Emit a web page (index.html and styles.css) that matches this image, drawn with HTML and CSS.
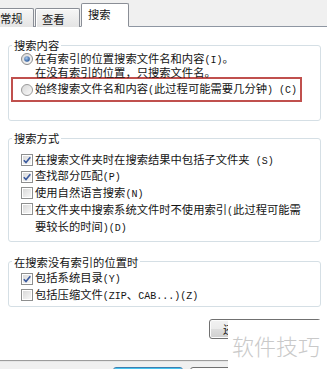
FILE: index.html
```html
<!DOCTYPE html>
<html lang="zh-CN">
<head>
<meta charset="utf-8">
<title>文件夹选项 - 搜索</title>
<link rel="stylesheet" href="styles.css">
</head>
<body>
<svg class="defs" width="0" height="0" aria-hidden="true">
  <defs>
    <linearGradient id="rg" x1="0" y1="0" x2="1" y2="1">
      <stop offset="0" stop-color="#d6d6d6"/>
      <stop offset="1" stop-color="#fbfbfb"/>
    </linearGradient>
    <radialGradient id="dot" cx="0.4" cy="0.35" r="0.7">
      <stop offset="0" stop-color="#a9c9ee"/>
      <stop offset="1" stop-color="#1e4f94"/>
    </radialGradient>
    <linearGradient id="cg" x1="0" y1="0" x2="1" y2="1">
      <stop offset="0" stop-color="#d9d9d9"/>
      <stop offset="1" stop-color="#f7f7f7"/>
    </linearGradient>
  </defs>
</svg>

<div class="tabs">
  <div class="tab t1">常规</div>
  <div class="tab t2">查看</div>
  <div class="tab t3 sel">搜索</div>
</div>

<div class="panel">
  <fieldset class="grp g1">
    <legend>搜索内容</legend>
    <div class="row r-first">
      <svg class="ctl" viewBox="0 0 12 12" width="12" height="12"><circle cx="6" cy="6" r="5.5" fill="url(#rg)" stroke="#8c8c8c"/><circle cx="6" cy="6" r="2.8" fill="url(#dot)"/></svg>
      <div class="txt tight">在有索引的位置搜索文件名和内容<span class="en">(I)</span>。<br>在没有索引的位置，只搜索文件名。</div>
    </div>
    <div class="hl">
      <div class="row">
        <svg class="ctl" viewBox="0 0 12 12" width="12" height="12"><circle cx="6" cy="6" r="5.5" fill="url(#rg)" stroke="#9a9a9a"/></svg>
        <div class="txt">始终搜索文件名和内容<span class="en">(</span>此过程可能需要几分钟<span class="en">) (C)</span></div>
      </div>
    </div>
  </fieldset>

  <fieldset class="grp g2">
    <legend>搜索方式</legend>
    <div class="row">
      <svg class="ctl" viewBox="0 0 12 12" width="12" height="12"><rect x=".5" y=".5" width="11" height="11" fill="#fff" stroke="#8e8f8f"/><rect x="2" y="2" width="8" height="8" fill="url(#cg)"/><path d="M2.8 6.2 L5 8.6 L9.3 3.2" fill="none" stroke="#3b5a9e" stroke-width="1.6"/></svg>
      <div class="txt">在搜索文件夹时在搜索结果中包括子文件夹<span class="en"> (S)</span></div>
    </div>
    <div class="row">
      <svg class="ctl" viewBox="0 0 12 12" width="12" height="12"><rect x=".5" y=".5" width="11" height="11" fill="#fff" stroke="#8e8f8f"/><rect x="2" y="2" width="8" height="8" fill="url(#cg)"/><path d="M2.8 6.2 L5 8.6 L9.3 3.2" fill="none" stroke="#3b5a9e" stroke-width="1.6"/></svg>
      <div class="txt">查找部分匹配<span class="en">(P)</span></div>
    </div>
    <div class="row">
      <svg class="ctl" viewBox="0 0 12 12" width="12" height="12"><rect x=".5" y=".5" width="11" height="11" fill="#fff" stroke="#8e8f8f"/><rect x="2" y="2" width="8" height="8" fill="url(#cg)"/></svg>
      <div class="txt">使用自然语言搜索<span class="en">(N)</span></div>
    </div>
    <div class="row multi">
      <svg class="ctl" viewBox="0 0 12 12" width="12" height="12"><rect x=".5" y=".5" width="11" height="11" fill="#fff" stroke="#8e8f8f"/><rect x="2" y="2" width="8" height="8" fill="url(#cg)"/></svg>
      <div class="txt">在文件夹中搜索系统文件时不使用索引<span class="en">(</span>此过程可能需<br>要较长的时间<span class="en">)(D)</span></div>
    </div>
  </fieldset>

  <fieldset class="grp g3">
    <legend>在搜索没有索引的位置时</legend>
    <div class="row">
      <svg class="ctl" viewBox="0 0 12 12" width="12" height="12"><rect x=".5" y=".5" width="11" height="11" fill="#fff" stroke="#8e8f8f"/><rect x="2" y="2" width="8" height="8" fill="url(#cg)"/><path d="M2.8 6.2 L5 8.6 L9.3 3.2" fill="none" stroke="#3b5a9e" stroke-width="1.6"/></svg>
      <div class="txt">包括系统目录<span class="en">(Y)</span></div>
    </div>
    <div class="row">
      <svg class="ctl" viewBox="0 0 12 12" width="12" height="12"><rect x=".5" y=".5" width="11" height="11" fill="#fff" stroke="#8e8f8f"/><rect x="2" y="2" width="8" height="8" fill="url(#cg)"/></svg>
      <div class="txt">包括压缩文件<span class="en">(ZIP</span>、<span class="en">CAB...)(Z)</span></div>
    </div>
  </fieldset>

  <div class="btnrow">
    <button class="btn restore"><span class="btxt">还原默认值(R)</span></button>
  </div>
</div>

<div class="footer">
  <button class="btn ok" aria-label="确定"></button>
  <button class="btn cancel" aria-label="取消"></button>
</div>

<div class="watermark">软件技巧</div>
</body>
</html>
```

FILE: styles.css
```css
html, body {
  margin: 0;
  padding: 0;
}
body {
  width: 327px;
  height: 369px;
  overflow: hidden;
  position: relative;
  background: #ffffff;
  font-family: "Noto Sans CJK SC", sans-serif;
  font-size: 11.3px;
  color: #141414;
}
.defs {
  position: absolute;
  width: 0;
  height: 0;
}
.en {
  font-family: "Liberation Mono", monospace;
  font-size: 10px;
}

/* tab strip */
.tabs {
  height: 27px;
  box-sizing: border-box;
  display: flex;
  align-items: flex-end;
  gap: 1px;
  background: #f0f0f0;
  border-bottom: 1px solid #8e96a2;
}
.tab {
  box-sizing: border-box;
  height: 19px;
  margin-bottom: -1px;
  border: 1px solid #8a8e96;
  border-bottom: none;
  border-radius: 2px 2px 0 0;
  background: linear-gradient(#f6f6f6, #e4e4e4);
  box-shadow: inset 1px 1px 0 #ffffff;
  line-height: 18px;
  white-space: nowrap;
}
.t1 {
  width: 44px;
  margin-left: -10px;
  padding-left: 9px;
}
.t2 {
  width: 45px;
  padding-left: 6px;
  line-height: 20px;
}
.t3 {
  width: 48px;
  padding-left: 6px;
}
.tab.sel {
  height: 24px;
  background: #ffffff;
  box-shadow: none;
  line-height: 20px;
  position: relative;
  z-index: 1;
  border-bottom: 1px solid #ffffff;
}

/* main panel */
.panel {
  height: 334px;
  box-sizing: border-box;
  background: #ffffff;
  border-bottom: 1px solid #9c9c9c;
  display: flex;
  flex-direction: column;
}
.grp {
  margin: 0 6px 0 8px;
  padding: 0;
  border: 1px solid #d5dfe5;
  border-radius: 3px;
  min-width: 0;
}
.grp legend {
  margin-left: 3px;
  padding: 0 2px;
  line-height: 14px;
}
.g1 {
  margin-top: 11px;
  padding-bottom: 18px;
}
.g2 {
  margin-top: 10px;
  padding-top: 7px;
  padding-bottom: 11px;
}
.g3 {
  margin-top: 13px;
  padding-top: 2px;
  padding-bottom: 2px;
}

.row {
  display: flex;
  align-items: center;
  gap: 2px;
  padding-left: 12px;
  height: 16.5px;
  white-space: nowrap;
}
.row .ctl {
  flex: none;
}
.row.multi {
  height: 28px;
  align-items: flex-start;
}
.row.multi .ctl {
  margin-top: 1px;
}
.row.multi .txt {
  line-height: 14px;
}
.r-first {
  height: 23px;
  align-items: flex-start;
  padding-top: 1px;
}
.txt {
  line-height: 16px;
}
.txt.tight {
  line-height: 10.5px;
}

/* highlighted option (red frame) */
.hl {
  margin: 1px 18px 0 2px;
  height: 25px;
  box-sizing: border-box;
  border: 2px solid #c0504d;
  display: flex;
  align-items: center;
}
.hl .row {
  padding-left: 8px;
}

/* buttons */
.btnrow {
  display: flex;
  justify-content: flex-end;
  margin-top: 12px;
  padding-right: 6px;
}
.btn {
  box-sizing: border-box;
  font-family: "Noto Sans CJK SC", sans-serif;
  font-size: 11.3px;
  color: #141414;
  border: 1px solid #707070;
  border-radius: 3px;
  background: linear-gradient(#f2f2f2 0%, #ebebeb 50%, #dddddd 51%, #cfcfcf 100%);
  box-shadow: inset 0 0 0 1px #fcfcfc;
  padding: 0;
}
.restore {
  width: 112px;
  height: 20px;
  text-align: left;
  padding-left: 13px;
}
.footer {
  display: flex;
  align-items: flex-start;
  gap: 7px;
  padding-left: 113px;
  padding-top: 5px;
  height: 8px;
  overflow: hidden;
  box-sizing: border-box;
  background: #f0f0f0;
  border-top: 1px solid #e6e6e6;
}
.ok {
  flex: none;
  width: 70px;
  height: 23px;
  border-color: #3c7fb1;
  background: linear-gradient(#eaf6fd 0%, #d9f0fc 50%, #bee6fd 51%, #a7d9f5 100%);
  box-shadow: inset 0 0 0 1px #48c4f0;
}
.cancel {
  flex: none;
  width: 70px;
  height: 23px;
}

/* overlay watermark */
.watermark {
  position: absolute;
  left: 228px;
  top: 320px;
  right: 0;
  bottom: 0;
  background: #ffffff;
  color: #c9c9c9;
  font-weight: 300;
  font-size: 22px;
  line-height: 24px;
  padding: 13px 0 0 4px;
  box-sizing: border-box;
  white-space: nowrap;
}
```
